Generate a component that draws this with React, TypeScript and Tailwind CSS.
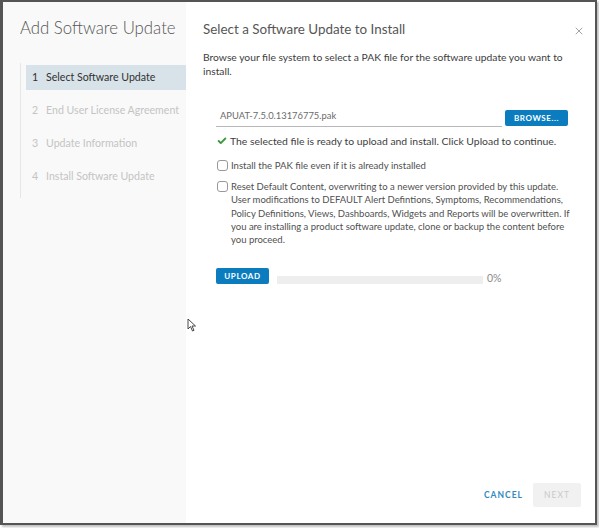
import { X, Check } from 'lucide-react'

const steps = [
  { n: 1, label: 'Select Software Update', active: true },
  { n: 2, label: 'End User License Agreement', active: false },
  { n: 3, label: 'Update Information', active: false },
  { n: 4, label: 'Install Software Update', active: false },
]

function Checkbox() {
  return <span className="mt-[1px] block h-[11px] w-[11px] shrink-0 rounded-[3px] border border-[#999] bg-white" />
}

export default function App() {
  return (
    <div
      className="relative h-[528px] w-[599px] bg-white"
      style={{ fontFamily: 'Lato, "Open Sans", sans-serif' }}
    >
      <div className="flex h-[525px] w-[597px] border-t-2 border-r-2 border-b-2 border-l-[3px] border-[#555] bg-white shadow-[2px_2px_2px_rgba(0,0,0,0.25)]">
        {/* Wizard steps */}
        <aside className="flex w-[183px] shrink-0 flex-col bg-[#f9f9f9] pt-[15px]">
          <h1 className="pl-[17px] text-[16.8px] leading-[22px] font-light whitespace-nowrap text-[#565656]">
            Add Software Update
          </h1>
          <nav className="mt-[24px] ml-[17px] border-l border-[#e6e6e6] pt-[2px] pl-[5px]">
            {steps.map((s) => (
              <div
                key={s.n}
                className={
                  'mb-[8.3px] flex h-[25px] items-center text-[10.6px] whitespace-nowrap ' +
                  (s.active ? 'bg-[#d8e3e9] text-[#313131]' : 'text-[#c4c4c4]')
                }
              >
                <span className="w-[14px] pl-[6px] box-content">{s.n}</span>
                <span>{s.label}</span>
              </div>
            ))}
          </nav>
        </aside>

        {/* Main pane */}
        <main className="flex min-w-0 flex-1 flex-col pt-[17px] pr-[27px] pl-[17px] pb-[16px]">
          <div className="flex items-center justify-between">
            <h2 className="text-[13.4px] leading-[20px] text-[#565656]">Select a Software Update to Install</h2>
            <X className="mt-[3px] -mr-[17px] h-[12px] w-[12px] text-[#7a7a7a]" strokeWidth={1.4} />
          </div>

          <p className="mt-[11px] text-[10.3px] leading-[14px] text-[#3d3d3d]">
            Browse your file system to select a PAK file for the software update you want to install.
          </p>

          <div className="mt-[31px] flex items-end gap-[3px] pl-[13px]">
            <div className="flex-1 border-b border-[#b8b8b8] pb-[3px] pl-[4px] text-[9.4px] leading-[14px] text-[#6b6b6b]">
              APUAT-7.5.0.13176775.pak
            </div>
            <button className="mb-[1px] h-[16px] w-[63px] rounded-[2px] bg-[#0b7dbf] text-[8px] font-bold tracking-[0.6px] text-white">
              BROWSE...
            </button>
          </div>

          <div className="mt-[7px] flex items-center gap-[3px] pl-[14px] text-[10.4px] leading-[14px] text-[#404040]">
            <Check className="h-[10px] w-[10px] text-[#3c9a3c]" strokeWidth={4.5} />
            <span>The selected file is ready to upload and install. Click Upload to continue.</span>
          </div>

          <label className="mt-[11px] flex gap-[3px] pl-[14px] text-[9.6px] leading-[14px] text-[#505050]">
            <Checkbox />
            <span>Install the PAK file even if it is already installed</span>
          </label>

          <label className="mt-[7px] flex gap-[3px] pl-[14px] text-[9.5px] leading-[13.3px] text-[#505050]">
            <Checkbox />
            <span className="whitespace-nowrap">
              Reset Default Content, overwriting to a newer version provided by this update.
              <br />
              User modifications to DEFAULT Alert Defintions, Symptoms, Recommendations,
              <br />
              Policy Definitions, Views, Dashboards, Widgets and Reports will be overwritten. If
              <br />
              you are installing a product software update, clone or backup the content before
              <br />
              you proceed.
            </span>
          </label>

          <div className="mt-[18px] flex items-center pl-[13px]">
            <button className="h-[16px] w-[53px] rounded-[2px] bg-[#0b7dbf] text-[8px] font-bold tracking-[0.6px] text-white">
              UPLOAD
            </button>
            <div className="mt-[8px] ml-[8px] h-[8px] w-[206px] bg-[#eeeeee]" />
            <span className="mt-[7px] ml-[4px] text-[10.5px] text-[#8a8a8a]">0%</span>
          </div>

          <div className="mt-auto -mr-[13px] flex items-center justify-end gap-[10px]">
            <button className="text-[8.5px] font-bold tracking-[1px] text-[#3089c0]">CANCEL</button>
            <button className="h-[24px] w-[48px] rounded-[2px] bg-[#f1f1f1] text-[8.5px] tracking-[1px] text-[#c9c9c9]">
              NEXT
            </button>
          </div>
        </main>
      </div>

      {/* mouse pointer */}
      <svg className="absolute top-[318px] left-[187px]" width="10" height="14" viewBox="0 0 10 14">
        <path d="M1 1 L1 11 L3.5 8.5 L5.5 13 L7 12.3 L5 8 L8.5 8 Z" fill="white" stroke="#333" strokeWidth="0.9" />
      </svg>
    </div>
  )
}
